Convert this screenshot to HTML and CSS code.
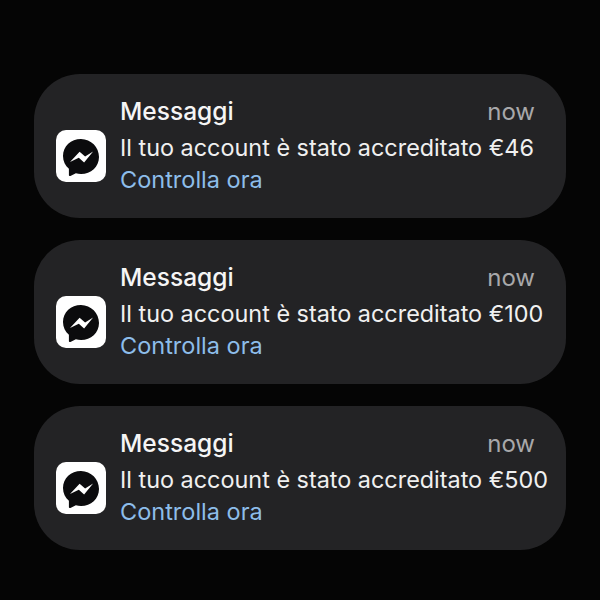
FILE: index.html
```html
<!DOCTYPE html>
<html lang="en">
<head>
    <meta charset="UTF-8">
    <title>Messaggi</title>
    <link rel="stylesheet" href="styles.css">
</head>
<body>
<svg class="defs" width="0" height="0">
    <symbol id="messenger" viewBox="0 0 50 52">
        <path fill="#0b0b0d" d="M25 9C15 9 7 16.300 7 26c0 5.200 2.300 9.600 5.900 12.700v6.300c0 .8.800 1.200 1.500.9l5.500-2.700c1.600.5 3.300.8 5.100.8 10 0 18-7.300 18-17S35 9 25 9z"/>
        <path fill="#fff" d="M14 32l9.600-10.300 5.500 4.900 8-5-9 10.900-5.300-4.800z"/>
    </symbol>
</svg>
<div class="list">
    <div class="notif">
        <div class="app-icon"><svg class="glyph"><use href="#messenger"></use></svg></div>
        <div class="content">
            <div class="top"><span class="app">Messaggi</span><span class="time">now</span></div>
            <div class="msg">Il tuo account è stato accreditato €46</div>
            <div class="link">Controlla ora</div>
        </div>
    </div>
    <div class="notif">
        <div class="app-icon"><svg class="glyph"><use href="#messenger"></use></svg></div>
        <div class="content">
            <div class="top"><span class="app">Messaggi</span><span class="time">now</span></div>
            <div class="msg">Il tuo account è stato accreditato €100</div>
            <div class="link">Controlla ora</div>
        </div>
    </div>
    <div class="notif">
        <div class="app-icon"><svg class="glyph"><use href="#messenger"></use></svg></div>
        <div class="content">
            <div class="top"><span class="app">Messaggi</span><span class="time">now</span></div>
            <div class="msg">Il tuo account è stato accreditato €500</div>
            <div class="link">Controlla ora</div>
        </div>
    </div>
</div>
</body>
</html>
```
FILE: styles.css
```css
html, body{
    margin: 0;
    height: 100%;
    background: #050505;
}
.defs{
    display: block;
    height: 0;
}
.list{
    display: flex;
    flex-direction: column;
    gap: 22px;
    padding: 74px 34px 0;
    font-family: "Inter", "Liberation Sans", sans-serif;
}
.notif{
    display: flex;
    align-items: flex-start;
    gap: 14px;
    height: 144px;
    padding: 0 31px 0 22px;
    box-sizing: border-box;
    border-radius: 46px;
    background: #232325;
}
.app-icon{
    width: 50px;
    height: 52px;
    margin-top: 56px;
    border-radius: 10px;
    background: #fff;
    flex-shrink: 0;
}
.glyph{
    display: block;
    width: 50px;
    height: 52px;
}
.content{
    flex-grow: 1;
    min-width: 0;
}
.top{
    display: flex;
    justify-content: space-between;
    align-items: center;
    height: 36px;
    margin: 19px 0 3px;
}
.app{
    font-size: 24.5px;
    font-weight: 500;
    color: #f5f5f5;
}
.time{
    font-size: 24px;
    color: #a8a8aa;
}
.msg{
    font-size: 23.4px;
    line-height: 32px;
    color: #f0f0f0;
    white-space: nowrap;
}
.link{
    font-size: 23.5px;
    line-height: 32px;
    color: #8dbdea;
}
```
